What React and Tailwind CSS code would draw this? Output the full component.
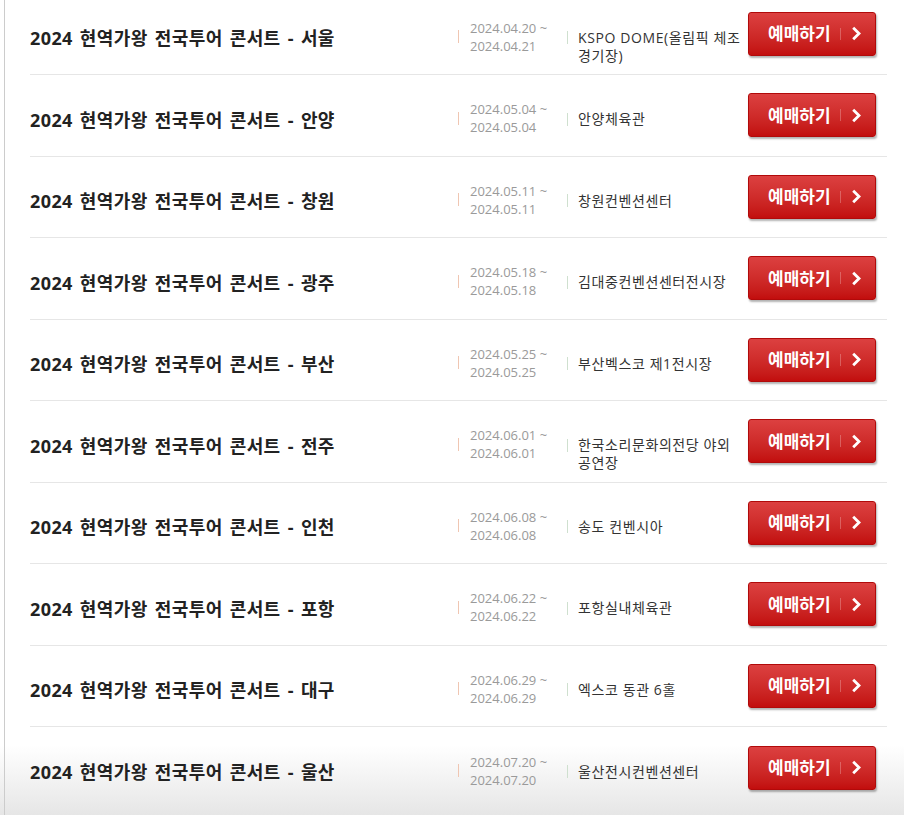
import React from "react";

const concerts = [
  { city: "서울", start: "2024.04.20", end: "2024.04.21", venue: "KSPO DOME(올림픽 체조경기장)" },
  { city: "안양", start: "2024.05.04", end: "2024.05.04", venue: "안양체육관" },
  { city: "창원", start: "2024.05.11", end: "2024.05.11", venue: "창원컨벤션센터" },
  { city: "광주", start: "2024.05.18", end: "2024.05.18", venue: "김대중컨벤션센터전시장" },
  { city: "부산", start: "2024.05.25", end: "2024.05.25", venue: "부산벡스코 제1전시장" },
  { city: "전주", start: "2024.06.01", end: "2024.06.01", venue: "한국소리문화의전당 야외공연장" },
  { city: "인천", start: "2024.06.08", end: "2024.06.08", venue: "송도 컨벤시아" },
  { city: "포항", start: "2024.06.22", end: "2024.06.22", venue: "포항실내체육관" },
  { city: "대구", start: "2024.06.29", end: "2024.06.29", venue: "엑스코 동관 6홀" },
  { city: "울산", start: "2024.07.20", end: "2024.07.20", venue: "울산전시컨벤션센터" },
];

function BookButton() {
  return (
    <button className="w-[128px] h-[44px] flex items-center rounded-[3px] border border-[#b10a0a] bg-linear-to-b from-[#dc4040] to-[#c20d0d] shadow-[1px_2px_2px_rgba(0,0,0,0.3)] text-white">
      <span className="ml-[19px] text-[17px] font-bold leading-none">
        예매하기
      </span>
      <span className="ml-[9px] h-[12px] border-l border-white/25" />
      <svg
        className="ml-[10px]"
        width="11"
        height="15"
        viewBox="0 0 11 15"
        fill="none"
      >
        <polyline
          points="2.2,1.8 8,7.5 2.2,13.2"
          stroke="white"
          strokeWidth="2.8"
        />
      </svg>
    </button>
  );
}

function ConcertRow({ item, last }) {
  return (
    <div
      className={`h-[81.5px] flex items-center ${
        last ? "" : "border-b border-[#e6e6e6]"
      }`}
    >
      <div className="w-[428px] pt-[10px] text-[18px] font-bold text-[#222] tracking-[0.4px] [word-spacing:2px]">
        2024 현역가왕 전국투어 콘서트 - {item.city}
      </div>
      <div className="w-[109px] pt-[6px] flex items-center">
        <span className="h-[13px] border-l border-[#f0c6b2]" />
        <div className="pl-[11px] text-[13px] leading-[18px] text-[#9a9a9a]">
          <div>{item.start} ~</div>
          <div>{item.end}</div>
        </div>
      </div>
      <div className="w-[181px] pt-[8px] flex items-center">
        <span className="h-[13px] border-l border-[#cfe0cf]" />
        <div className="h-[18px] pl-[10px]">
          <div className="w-[165px] text-[14px] tracking-[0.6px] leading-[18px] text-[#333]">
            {item.venue}
          </div>
        </div>
      </div>
      <BookButton />
    </div>
  );
}

export default function App() {
  return (
    <div className="min-h-[815px] pl-[4px] font-['Open_Sans','Noto_Sans_CJK_KR',sans-serif] bg-[linear-gradient(to_bottom,#ffffff_0,#ffffff_calc(100%-70px),#e6e6e6_100%)]">
      <div className="min-h-[815px] border-l border-[#cccccc] pl-[25px] pr-[17px] overflow-hidden">
        <div className="mt-[-6.5px]">
          {concerts.map((item, i) => (
            <ConcertRow
              key={item.city}
              item={item}
              last={i === concerts.length - 1}
            />
          ))}
        </div>
      </div>
    </div>
  );
}
